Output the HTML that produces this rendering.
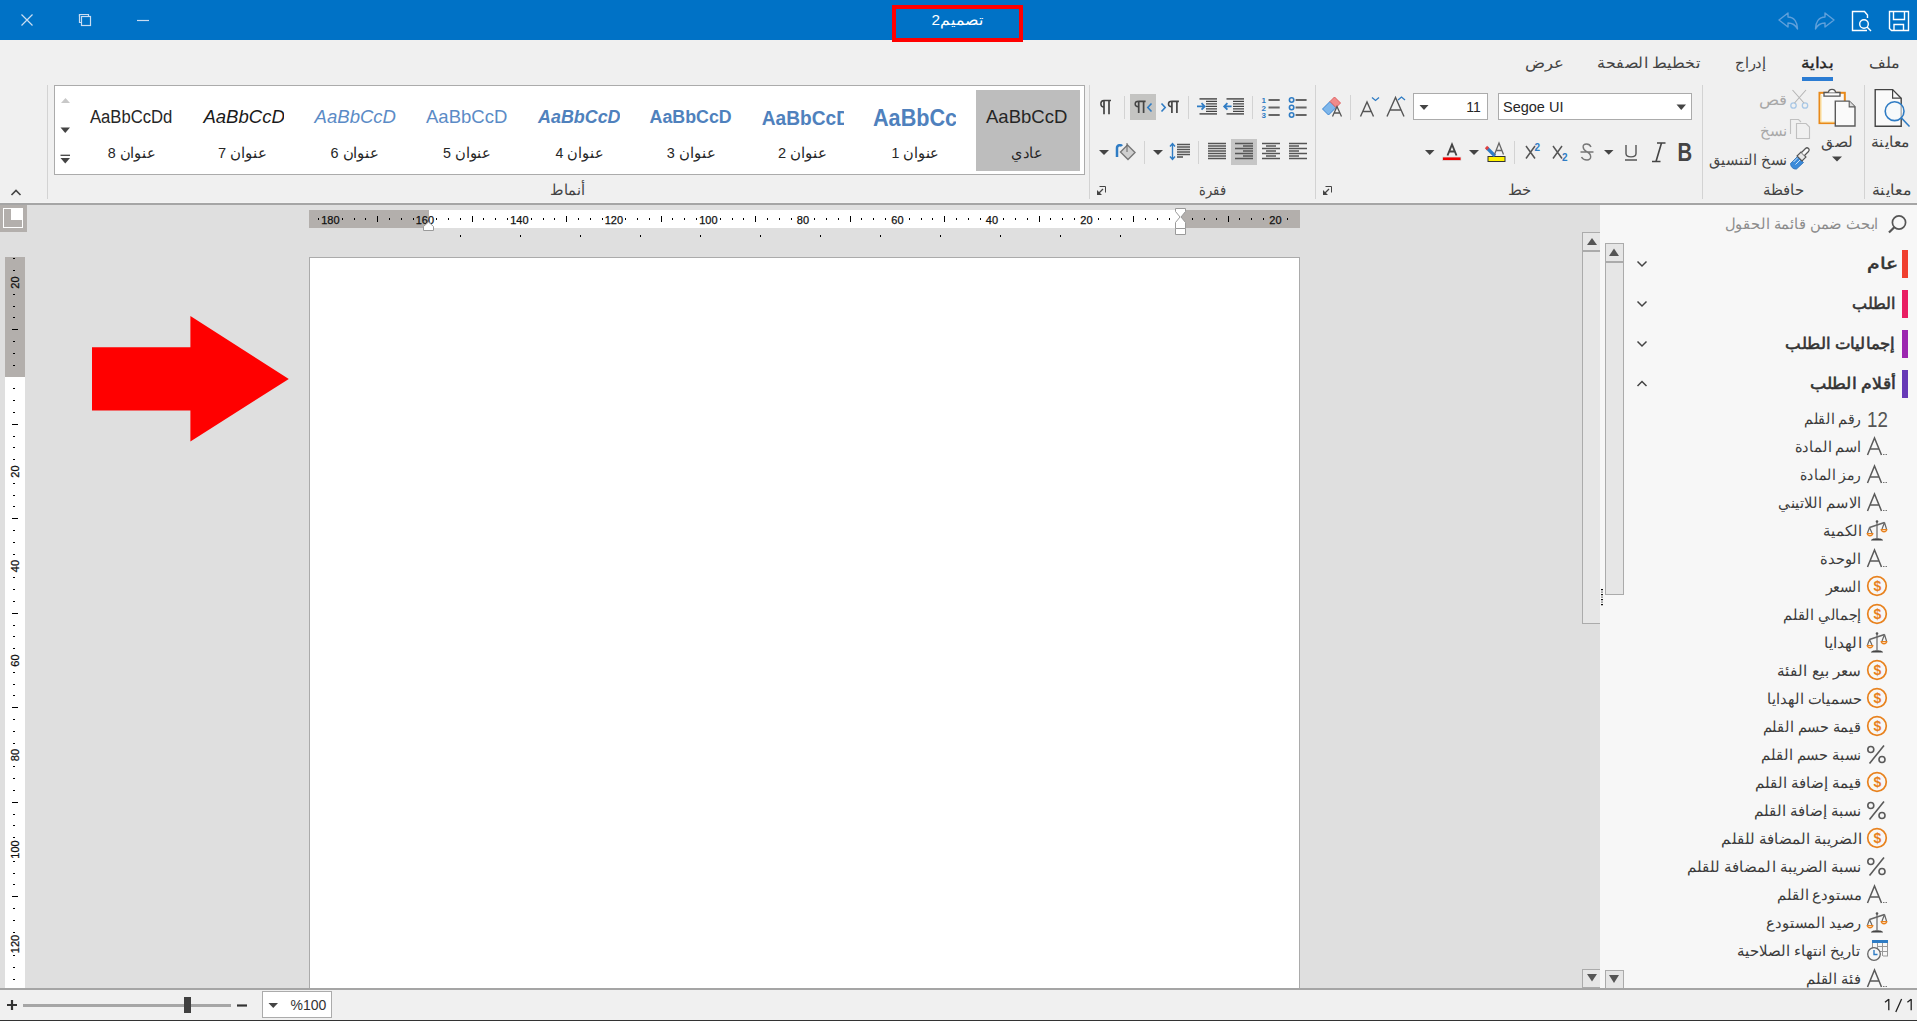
<!DOCTYPE html>
<html><head><meta charset="utf-8"><style>
html,body{margin:0;padding:0;}
body{width:1917px;height:1021px;overflow:hidden;position:relative;background:#F0F0F0;font-family:"Liberation Sans",sans-serif;}
#w>div{position:absolute;}
svg{position:absolute;left:0;top:0;}
</style></head><body><div id="w">
<div style="left:0px;top:0px;width:1917px;height:40px;background:#0072C6;"></div><div style="left:0px;top:40px;width:1917px;height:163px;background:#F0F0F0;"></div><div style="left:0px;top:202px;width:1917px;height:1px;background:#F3F3F3;"></div><div style="left:0px;top:203px;width:1917px;height:2px;background:#A5A5A5;"></div><div style="left:0px;top:205px;width:1600px;height:783px;background:#DFDFDF;"></div><div style="left:1600px;top:205px;width:317px;height:783px;background:#F7F7F7;"></div><div style="left:0px;top:988px;width:1917px;height:2px;background:#A5A5A5;"></div><div style="left:0px;top:990px;width:1917px;height:30px;background:#F0F0F0;"></div><div style="left:0px;top:1020px;width:1917px;height:1px;background:#333333;"></div><div style="left:892px;top:5px;width:131px;height:37px;border:4px solid #FF0000;box-sizing:border-box;"></div><div style="left:1802px;top:77px;width:31px;height:4px;background:#2B7CD3;"></div><div style="left:47px;top:85px;width:1px;height:114px;background:#D3D3D3;"></div><div style="left:1089px;top:85px;width:1px;height:114px;background:#D3D3D3;"></div><div style="left:1315px;top:85px;width:1px;height:114px;background:#D3D3D3;"></div><div style="left:1702px;top:85px;width:1px;height:114px;background:#D3D3D3;"></div><div style="left:1864px;top:85px;width:1px;height:114px;background:#D3D3D3;"></div><div style="left:54px;top:85px;width:1031px;height:90px;background:#FFFFFF;border:1px solid #ABABAB;box-sizing:border-box;"></div><div style="left:976px;top:90px;width:104px;height:81px;background:#BDBDBD;"></div><div style="left:1498px;top:93px;width:194px;height:27px;background:#FFFFFF;border:1px solid #ABABAB;box-sizing:border-box;"></div><div style="left:1413px;top:93px;width:75px;height:27px;background:#FFFFFF;border:1px solid #ABABAB;box-sizing:border-box;"></div><div style="left:262px;top:991px;width:70px;height:27px;background:#FFFFFF;border:1px solid #ABABAB;box-sizing:border-box;"></div><div style="left:1514px;top:141px;width:1px;height:23px;background:#D3D3D3;"></div><div style="left:1350px;top:95px;width:1px;height:25px;background:#D3D3D3;"></div><div style="left:1124px;top:96px;width:1px;height:23px;background:#D3D3D3;"></div><div style="left:1130px;top:94px;width:26px;height:26px;background:#C4C4C2;"></div><div style="left:1188px;top:96px;width:1px;height:23px;background:#D3D3D3;"></div><div style="left:1252px;top:96px;width:1px;height:23px;background:#D3D3D3;"></div><div style="left:1144px;top:141px;width:1px;height:23px;background:#D3D3D3;"></div><div style="left:1198px;top:141px;width:1px;height:23px;background:#D3D3D3;"></div><div style="left:1231px;top:139px;width:26px;height:26px;background:#C6C6C6;"></div><div style="left:0px;top:205px;width:27px;height:27px;background:#B3AFAC;"></div><div style="left:3px;top:208px;width:20px;height:20px;background:#FFFFFF;"></div><div style="left:309px;top:210px;width:991px;height:18px;background:#FFFFFF;"></div><div style="left:309px;top:210px;width:120px;height:18px;background:#B3AFAC;"></div><div style="left:1181px;top:210px;width:119px;height:18px;background:#B3AFAC;"></div><div style="left:5px;top:257px;width:20px;height:731px;background:#FFFFFF;"></div><div style="left:5px;top:257px;width:20px;height:120px;background:#B3AFAC;"></div><div style="left:309px;top:257px;width:991px;height:731px;background:#FFFFFF;border:1px solid #ABABAB;border-bottom:none;box-sizing:border-box;"></div><div style="left:1582px;top:232px;width:18px;height:392px;background:#E6E6E6;border:1px solid #ABABAB;border-right:none;box-sizing:border-box;"></div><div style="left:1583px;top:250px;width:17px;height:2px;background:#ABABAB;"></div><div style="left:1582px;top:969px;width:18px;height:19px;background:#E6E6E6;border:1px solid #ABABAB;border-right:none;box-sizing:border-box;"></div><div style="left:1605px;top:243px;width:19px;height:352px;background:#E6E6E6;border:1px solid #ABABAB;box-sizing:border-box;"></div><div style="left:1606px;top:261px;width:17px;height:2px;background:#ABABAB;"></div><div style="left:1605px;top:970px;width:19px;height:18px;background:#E6E6E6;border:1px solid #ABABAB;border-bottom:none;box-sizing:border-box;"></div><div style="left:1902px;top:250px;width:6px;height:28px;background:#F0402F;"></div><div style="left:1902px;top:290px;width:6px;height:28px;background:#E91E63;"></div><div style="left:1902px;top:330px;width:6px;height:28px;background:#9C27B0;"></div><div style="left:1902px;top:370px;width:6px;height:28px;background:#673AB7;"></div><div style="left:23px;top:1004px;width:208px;height:3px;background:#A6A6A6;"></div><div style="left:184px;top:997px;width:7px;height:16px;background:#404040;"></div>
</div><svg width="1917" height="1021" viewBox="0 0 1917 1021"><defs><clipPath id="cl0"><rect x="977" y="95" width="91" height="40"/></clipPath><clipPath id="cl1"><rect x="865" y="95" width="91" height="40"/></clipPath><clipPath id="cl2"><rect x="753" y="95" width="91" height="40"/></clipPath><clipPath id="cl3"><rect x="641" y="95" width="91" height="40"/></clipPath><clipPath id="cl4"><rect x="529" y="95" width="91" height="40"/></clipPath><clipPath id="cl5"><rect x="417" y="95" width="91" height="40"/></clipPath><clipPath id="cl6"><rect x="305" y="95" width="91" height="40"/></clipPath><clipPath id="cl7"><rect x="193" y="95" width="91" height="40"/></clipPath><clipPath id="cl8"><rect x="81" y="95" width="91" height="40"/></clipPath></defs>
<g><text x="931.51" y="25.30" textLength="51.69" lengthAdjust="spacingAndGlyphs" font-family="Liberation Sans" font-size="14.60" font-weight="normal" font-style="normal" fill="#ffffff">تصميم2</text></g><g><text x="1868.59" y="67.60" textLength="31.17" lengthAdjust="spacingAndGlyphs" font-family="Liberation Sans" font-size="14.60" font-weight="normal" font-style="normal" fill="#444444">ملف</text></g><g><text x="1800.98" y="67.60" textLength="32.33" lengthAdjust="spacingAndGlyphs" font-family="Liberation Sans" font-size="14.60" font-weight="normal" font-style="normal" fill="#262626" stroke="#262626" stroke-width="0.35">بداية</text></g><g><text x="1735.03" y="67.60" textLength="31.04" lengthAdjust="spacingAndGlyphs" font-family="Liberation Sans" font-size="14.60" font-weight="normal" font-style="normal" fill="#444444">إدراج</text></g><g><text x="1597.00" y="67.60" textLength="103.13" lengthAdjust="spacingAndGlyphs" font-family="Liberation Sans" font-size="14.60" font-weight="normal" font-style="normal" fill="#444444">تخطيط الصفحة</text></g><g><text x="1524.99" y="67.60" textLength="38.74" lengthAdjust="spacingAndGlyphs" font-family="Liberation Sans" font-size="14.60" font-weight="normal" font-style="normal" fill="#444444">عرض</text></g><g><text x="986.00" y="122.90" textLength="81.41" lengthAdjust="spacingAndGlyphs" font-family="Liberation Sans" font-size="19.00" font-weight="normal" font-style="normal" fill="#262626">AaBbCcD</text></g><g clip-path="url(#cl1)"><text x="873.00" y="126.00" textLength="84.13" lengthAdjust="spacingAndGlyphs" font-family="Liberation Sans" font-size="23.20" font-weight="bold" font-style="normal" fill="#4F81BD">AaBbCc</text></g><g clip-path="url(#cl2)"><text x="761.80" y="124.70" textLength="88.18" lengthAdjust="spacingAndGlyphs" font-family="Liberation Sans" font-size="20.50" font-weight="bold" font-style="normal" fill="#4F81BD">AaBbCcD</text></g><g clip-path="url(#cl3)"><text x="649.60" y="122.90" textLength="82.13" lengthAdjust="spacingAndGlyphs" font-family="Liberation Sans" font-size="19.10" font-weight="bold" font-style="normal" fill="#4F81BD">AaBbCcD</text></g><g clip-path="url(#cl4)"><text x="538.00" y="122.90" textLength="82.54" lengthAdjust="spacingAndGlyphs" font-family="Liberation Sans" font-size="19.20" font-weight="bold" font-style="italic" fill="#4F81BD">AaBbCcD</text></g><g clip-path="url(#cl5)"><text x="426.00" y="123.00" textLength="81.42" lengthAdjust="spacingAndGlyphs" font-family="Liberation Sans" font-size="19.00" font-weight="normal" font-style="normal" fill="#5B8BC6">AaBbCcD</text></g><g clip-path="url(#cl6)"><text x="314.60" y="123.00" textLength="81.41" lengthAdjust="spacingAndGlyphs" font-family="Liberation Sans" font-size="19.00" font-weight="normal" font-style="italic" fill="#5B8BC6">AaBbCcD</text></g><g clip-path="url(#cl7)"><text x="203.40" y="123.00" textLength="81.41" lengthAdjust="spacingAndGlyphs" font-family="Liberation Sans" font-size="19.00" font-weight="normal" font-style="italic" fill="#1a1a1a">AaBbCcD</text></g><g><text x="89.90" y="123.00" textLength="82.47" lengthAdjust="spacingAndGlyphs" font-family="Liberation Sans" font-size="18.00" font-weight="normal" font-style="normal" fill="#262626">AaBbCcDd</text></g><g><text x="1011.01" y="158.20" textLength="32.02" lengthAdjust="spacingAndGlyphs" font-family="Liberation Sans" font-size="14.60" font-weight="normal" font-style="normal" fill="#262626">عادي</text></g><g><text x="891.52" y="158.20" textLength="47.66" lengthAdjust="spacingAndGlyphs" font-family="Liberation Sans" font-size="14.60" font-weight="normal" font-style="normal" fill="#262626">عنوان 1</text></g><g><text x="778.01" y="158.20" textLength="49.20" lengthAdjust="spacingAndGlyphs" font-family="Liberation Sans" font-size="14.60" font-weight="normal" font-style="normal" fill="#262626">عنوان 2</text></g><g><text x="666.79" y="158.20" textLength="48.72" lengthAdjust="spacingAndGlyphs" font-family="Liberation Sans" font-size="14.60" font-weight="normal" font-style="normal" fill="#262626">عنوان 3</text></g><g><text x="555.60" y="158.20" textLength="47.70" lengthAdjust="spacingAndGlyphs" font-family="Liberation Sans" font-size="14.60" font-weight="normal" font-style="normal" fill="#262626">عنوان 4</text></g><g><text x="443.00" y="158.20" textLength="48.16" lengthAdjust="spacingAndGlyphs" font-family="Liberation Sans" font-size="14.60" font-weight="normal" font-style="normal" fill="#262626">عنوان 5</text></g><g><text x="330.49" y="158.20" textLength="48.72" lengthAdjust="spacingAndGlyphs" font-family="Liberation Sans" font-size="14.60" font-weight="normal" font-style="normal" fill="#262626">عنوان 6</text></g><g><text x="218.00" y="158.20" textLength="49.19" lengthAdjust="spacingAndGlyphs" font-family="Liberation Sans" font-size="14.60" font-weight="normal" font-style="normal" fill="#262626">عنوان 7</text></g><g><text x="107.80" y="158.20" textLength="48.14" lengthAdjust="spacingAndGlyphs" font-family="Liberation Sans" font-size="14.60" font-weight="normal" font-style="normal" fill="#262626">عنوان 8</text></g><g><text x="549.99" y="195.00" textLength="35.02" lengthAdjust="spacingAndGlyphs" font-family="Liberation Sans" font-size="14.60" font-weight="normal" font-style="normal" fill="#444444">أنماط</text></g><g><text x="1199.00" y="195.30" textLength="26.76" lengthAdjust="spacingAndGlyphs" font-family="Liberation Sans" font-size="14.60" font-weight="normal" font-style="normal" fill="#444444">فقرة</text></g><g><text x="1507.96" y="195.00" textLength="23.02" lengthAdjust="spacingAndGlyphs" font-family="Liberation Sans" font-size="14.60" font-weight="normal" font-style="normal" fill="#444444">خط</text></g><g><text x="1762.62" y="195.00" textLength="41.01" lengthAdjust="spacingAndGlyphs" font-family="Liberation Sans" font-size="14.60" font-weight="normal" font-style="normal" fill="#444444">حافظة</text></g><g><text x="1872.00" y="195.30" textLength="39.11" lengthAdjust="spacingAndGlyphs" font-family="Liberation Sans" font-size="14.60" font-weight="normal" font-style="normal" fill="#444444">معاينة</text></g><g><text x="1871.01" y="146.80" textLength="38.63" lengthAdjust="spacingAndGlyphs" font-family="Liberation Sans" font-size="14.60" font-weight="normal" font-style="normal" fill="#444444">معاينة</text></g><g><text x="1821.40" y="146.50" textLength="32.14" lengthAdjust="spacingAndGlyphs" font-family="Liberation Sans" font-size="14.60" font-weight="normal" font-style="normal" fill="#444444">لصق</text></g><g><text x="1759.03" y="105.00" textLength="27.75" lengthAdjust="spacingAndGlyphs" font-family="Liberation Sans" font-size="14.60" font-weight="normal" font-style="normal" fill="#a8a8a8">قص</text></g><g><text x="1759.62" y="135.60" textLength="27.02" lengthAdjust="spacingAndGlyphs" font-family="Liberation Sans" font-size="14.60" font-weight="normal" font-style="normal" fill="#a8a8a8">نسخ</text></g><g><text x="1708.79" y="164.80" textLength="78.50" lengthAdjust="spacingAndGlyphs" font-family="Liberation Sans" font-size="14.60" font-weight="normal" font-style="normal" fill="#444444">نسخ التنسيق</text></g><g><text x="1503.00" y="112.00" textLength="60.47" lengthAdjust="spacingAndGlyphs" font-family="Liberation Sans" font-size="15.00" font-weight="normal" font-style="normal" fill="#262626">Segoe UI</text></g><g><text x="1466.34" y="112.00" textLength="14.51" lengthAdjust="spacingAndGlyphs" font-family="Liberation Sans" font-size="15.00" font-weight="normal" font-style="normal" fill="#262626">11</text></g><g><text x="290.50" y="1010.00" textLength="35.86" lengthAdjust="spacingAndGlyphs" font-family="Liberation Sans" font-size="15.00" font-weight="normal" font-style="normal" fill="#333333">%100</text></g><path d="M1888.8 999V1010.2M1885 1002.2L1888.8 999.2M1911.2 999V1010.2M1907.4 1002.2L1911.2 999.2M1901.6 999L1895.8 1012" stroke="#222" stroke-width="1.3" fill="none"/><g><text x="1724.71" y="229.30" textLength="153.63" lengthAdjust="spacingAndGlyphs" font-family="Liberation Sans" font-size="14.60" font-weight="normal" font-style="normal" fill="#8c8c8c">ابحث ضمن قائمة الحقول</text></g><g><text x="1866.96" y="268.80" textLength="31.90" lengthAdjust="spacingAndGlyphs" font-family="Liberation Sans" font-size="15.90" font-weight="normal" font-style="normal" fill="#333333" stroke="#333333" stroke-width="0.55">عام</text></g><g><text x="1851.80" y="308.80" textLength="43.00" lengthAdjust="spacingAndGlyphs" font-family="Liberation Sans" font-size="15.90" font-weight="normal" font-style="normal" fill="#333333" stroke="#333333" stroke-width="0.55">الطلب</text></g><g><text x="1785.51" y="348.80" textLength="108.98" lengthAdjust="spacingAndGlyphs" font-family="Liberation Sans" font-size="15.90" font-weight="normal" font-style="normal" fill="#333333" stroke="#333333" stroke-width="0.55">إجماليات الطلب</text></g><g><text x="1809.50" y="388.80" textLength="86.05" lengthAdjust="spacingAndGlyphs" font-family="Liberation Sans" font-size="15.90" font-weight="normal" font-style="normal" fill="#333333" stroke="#333333" stroke-width="0.55">أقلام الطلب</text></g><g><text x="1804.20" y="424.10" textLength="56.50" lengthAdjust="spacingAndGlyphs" font-family="Liberation Sans" font-size="14.60" font-weight="normal" font-style="normal" fill="#3c3c3c">رقم القلم</text></g><g><text x="1794.79" y="452.10" textLength="66.49" lengthAdjust="spacingAndGlyphs" font-family="Liberation Sans" font-size="14.60" font-weight="normal" font-style="normal" fill="#3c3c3c">اسم المادة</text></g><g><text x="1800.01" y="480.10" textLength="60.49" lengthAdjust="spacingAndGlyphs" font-family="Liberation Sans" font-size="14.60" font-weight="normal" font-style="normal" fill="#3c3c3c">رمز المادة</text></g><g><text x="1777.79" y="508.10" textLength="83.53" lengthAdjust="spacingAndGlyphs" font-family="Liberation Sans" font-size="14.60" font-weight="normal" font-style="normal" fill="#3c3c3c">الاسم اللاتيني</text></g><g><text x="1822.99" y="536.10" textLength="38.48" lengthAdjust="spacingAndGlyphs" font-family="Liberation Sans" font-size="14.60" font-weight="normal" font-style="normal" fill="#3c3c3c">الكمية</text></g><g><text x="1820.30" y="564.10" textLength="40.95" lengthAdjust="spacingAndGlyphs" font-family="Liberation Sans" font-size="14.60" font-weight="normal" font-style="normal" fill="#3c3c3c">الوحدة</text></g><g><text x="1825.69" y="592.10" textLength="35.02" lengthAdjust="spacingAndGlyphs" font-family="Liberation Sans" font-size="14.60" font-weight="normal" font-style="normal" fill="#3c3c3c">السعر</text></g><g><text x="1783.30" y="620.10" textLength="78.04" lengthAdjust="spacingAndGlyphs" font-family="Liberation Sans" font-size="14.60" font-weight="normal" font-style="normal" fill="#3c3c3c">إجمالي القلم</text></g><g><text x="1823.68" y="648.10" textLength="38.08" lengthAdjust="spacingAndGlyphs" font-family="Liberation Sans" font-size="14.60" font-weight="normal" font-style="normal" fill="#3c3c3c">الهدايا</text></g><g><text x="1777.00" y="676.10" textLength="84.65" lengthAdjust="spacingAndGlyphs" font-family="Liberation Sans" font-size="14.60" font-weight="normal" font-style="normal" fill="#3c3c3c">سعر بيع الفئة</text></g><g><text x="1767.49" y="704.10" textLength="94.02" lengthAdjust="spacingAndGlyphs" font-family="Liberation Sans" font-size="14.60" font-weight="normal" font-style="normal" fill="#3c3c3c">حسميات الهدايا</text></g><g><text x="1762.70" y="732.10" textLength="98.05" lengthAdjust="spacingAndGlyphs" font-family="Liberation Sans" font-size="14.60" font-weight="normal" font-style="normal" fill="#3c3c3c">قيمة حسم القلم</text></g><g><text x="1761.30" y="760.10" textLength="100.07" lengthAdjust="spacingAndGlyphs" font-family="Liberation Sans" font-size="14.60" font-weight="normal" font-style="normal" fill="#3c3c3c">نسبة حسم القلم</text></g><g><text x="1755.10" y="788.10" textLength="106.11" lengthAdjust="spacingAndGlyphs" font-family="Liberation Sans" font-size="14.60" font-weight="normal" font-style="normal" fill="#3c3c3c">قيمة إضافة القلم</text></g><g><text x="1753.80" y="816.10" textLength="107.62" lengthAdjust="spacingAndGlyphs" font-family="Liberation Sans" font-size="14.60" font-weight="normal" font-style="normal" fill="#3c3c3c">نسبة إضافة القلم</text></g><g><text x="1721.49" y="844.10" textLength="140.13" lengthAdjust="spacingAndGlyphs" font-family="Liberation Sans" font-size="14.60" font-weight="normal" font-style="normal" fill="#3c3c3c">الضريبة المضافة للقلم</text></g><g><text x="1687.21" y="872.10" textLength="173.68" lengthAdjust="spacingAndGlyphs" font-family="Liberation Sans" font-size="14.60" font-weight="normal" font-style="normal" fill="#3c3c3c">نسبة الضريبة المضافة للقلم</text></g><g><text x="1777.00" y="900.10" textLength="84.53" lengthAdjust="spacingAndGlyphs" font-family="Liberation Sans" font-size="14.60" font-weight="normal" font-style="normal" fill="#3c3c3c">مستودع القلم</text></g><g><text x="1766.10" y="928.10" textLength="95.08" lengthAdjust="spacingAndGlyphs" font-family="Liberation Sans" font-size="14.60" font-weight="normal" font-style="normal" fill="#3c3c3c">رصيد المستودع</text></g><g><text x="1737.30" y="956.10" textLength="123.11" lengthAdjust="spacingAndGlyphs" font-family="Liberation Sans" font-size="14.60" font-weight="normal" font-style="normal" fill="#3c3c3c">تاريخ انتهاء الصلاحية</text></g><g><text x="1805.91" y="984.10" textLength="55.04" lengthAdjust="spacingAndGlyphs" font-family="Liberation Sans" font-size="14.60" font-weight="normal" font-style="normal" fill="#3c3c3c">فئة القلم</text></g><g stroke="#C9DDF2" stroke-width="1.2" fill="none"><path d="M21.5 14.5L32.5 25.5M32.5 14.5L21.5 25.5"/><path d="M79.5 16.5V14.5H88.5V16.5"/><rect x="81.5" y="16.5" width="9" height="9"/><path d="M79.5 14.5V22.5H81.5"/><path d="M137 20.5H149"/></g><g fill="none" stroke="#5FA0DB" stroke-width="1.4" stroke-linejoin="round"><path d="M1779 20L1788 13V17C1794 17 1797.5 22 1797.5 29C1795 24 1792 23 1788 23V27Z"/><path d="M1834 20L1825 13V17C1819 17 1815.5 22 1815.5 29C1818 24 1821 23 1825 23V27Z"/></g><g fill="none" stroke="#FFFFFF" stroke-width="1.4"><path d="M1867 30.5H1852.5V11.5H1864.5L1867.5 15V18"/><circle cx="1864" cy="24" r="4.3"/><path d="M1867 27L1871 31"/><path d="M1889.5 11.5H1908.5V30.5H1891.5L1889.5 28.5Z"/><path d="M1893.5 11.5V19.5H1904.5V11.5"/><path d="M1894 30.5V24.5H1903.5V30.5"/></g><path d="M1875.2 126.2V89.6H1892.6L1901.2 98.2V126.2Z" fill="#FAFAFA" stroke="#444" stroke-width="1.4"/><path d="M1892.6 89.6V98.2H1901.2" fill="none" stroke="#444" stroke-width="1.2"/><g fill="none" stroke="#2F7CC4" stroke-width="1.6"><circle cx="1894.6" cy="111.2" r="9.4" fill="#F4F8FC" fill-opacity="0.6"/><path d="M1901.5 118L1909.5 126.5"/></g><rect x="1819.5" y="92.8" width="25.3" height="30.3" fill="#FAFAFA" stroke="#E8891A" stroke-width="2"/><path d="M1821 95V122H1844" fill="none" stroke="#FCE2A0" stroke-width="1.2"/><path d="M1824 92.5H1840V96.2H1824Z" fill="#fff" stroke="#555" stroke-width="1.3"/><path d="M1828.5 92.5C1828.5 88.3 1835.5 88.3 1835.5 92.5" fill="#fff" stroke="#555" stroke-width="1.3"/><path d="M1835.3 126V101.1H1849.2L1855 106.9V126Z" fill="#FAFAFA" stroke="#5A5A5A" stroke-width="1.4"/><path d="M1849.2 101.1V106.9H1855" fill="#DDD" stroke="#5A5A5A" stroke-width="1.1"/><path d="M1832 156.5H1842L1837.0 161.5Z" fill="#444"/><g fill="none" stroke="#A9C8E6" stroke-width="1.3"><circle cx="1793.5" cy="105.5" r="2.7"/><circle cx="1805" cy="105.5" r="2.7"/></g><path d="M1794.5 103L1806 90M1804 103L1792.5 90" stroke="#B5B5B5" stroke-width="1.1"/><g fill="#F0F0F0" stroke="#C0C0C0" stroke-width="1.1"><path d="M1790.5 134V119.5H1798.5L1801 122"/><path d="M1796.5 138.5V123.5H1806L1809.5 127V138.5Z"/></g><path d="M1790.5 163.5L1797.5 156.5L1803.5 162.5L1796.5 169C1793 169.5 1790.5 166.5 1790.5 163.5Z" fill="#3C8BDA" stroke="#2A6CB5" stroke-width="0.8"/><path d="M1793.5 162L1798 157.5M1795.5 164.5L1800 160" stroke="#CFE4F8" stroke-width="1"/><path d="M1797 156L1801 152L1806 157L1802 161Z" fill="#E8E8E8" stroke="#555" stroke-width="1.1"/><path d="M1801.5 152.5L1805.5 148.5C1807.5 146.5 1810.5 149.5 1808.5 151.5L1804.5 155.5" fill="#FAFAFA" stroke="#555" stroke-width="1.2"/><path d="M1676.5 104.5H1686L1681.25 110Z" fill="#444"/><path d="M1419.5 105H1428.5L1424.0 110Z" fill="#444"/><text x="1677.5" y="161.5" font-family="Liberation Sans" font-weight="bold" font-size="26" fill="#444" transform="translate(1677.5,161.5) scale(0.78,1) translate(-1677.5,-161.5)">B</text><path d="M1657 143H1665.5M1652 161.5H1660.5M1661.5 143L1656 161.5" stroke="#444" stroke-width="1.6" fill="none"/><path d="M1626 145V153.5C1626 158 1636 158 1636 153.5V145M1625 160H1637" stroke="#555" stroke-width="1.4" fill="none"/><path d="M1591 147C1590 144.5 1588 144 1586.5 144C1582 144 1582 149 1586.5 151.5C1592 154 1592 160 1587 160C1585 160 1582.5 159 1581.5 157M1580.5 152H1593.5" stroke="#777" stroke-width="1.4" fill="none"/><path d="M1604 150H1613.5L1608.75 154.8Z" fill="#444"/><path d="M1553 146L1562 158.5M1562 146L1553 158.5" stroke="#555" stroke-width="1.5"/><text x="1562" y="160.5" font-family="Liberation Sans" font-weight="bold" font-size="10" fill="#2F7CC4">2</text><path d="M1526 146L1535 158.5M1535 146L1526 158.5" stroke="#555" stroke-width="1.5"/><text x="1534.5" y="150.5" font-family="Liberation Sans" font-weight="bold" font-size="10" fill="#2F7CC4">2</text><rect x="1488" y="156.5" width="17" height="5" fill="#FFF200" stroke="#333" stroke-width="1"/><path d="M1487 148L1495 156" stroke="#2F7CC4" stroke-width="3.2"/><path d="M1486 147L1488 149" stroke="#E04040" stroke-width="3.2"/><path d="M1494.5 154.5L1499 143L1503.5 154.5M1496.5 150.5H1501.5" stroke="#666" stroke-width="1.3" fill="none"/><path d="M1469 150H1479L1474.0 155Z" fill="#444"/><path d="M1447.5 155.5L1452 144.5L1456.5 155.5M1449.3 151.5H1454.7" stroke="#444" stroke-width="1.9" fill="none"/><rect x="1442.5" y="157" width="18.5" height="3.5" fill="#F00000" stroke="#D8E4E4" stroke-width="0.8"/><path d="M1425 150H1434.5L1429.75 155Z" fill="#444"/><path d="M1387 116.5L1395.5 97.5L1404 116.5M1390 110H1401" stroke="#555" stroke-width="1.4" fill="none"/><path d="M1398 100L1401.5 97L1405 100" stroke="#2F7CC4" stroke-width="1.3" fill="none"/><path d="M1360.5 116.5L1367 102L1373.5 116.5M1363 111.5H1371" stroke="#555" stroke-width="1.4" fill="none"/><path d="M1372 97.5L1375.5 100.5L1379 97.5" stroke="#2F7CC4" stroke-width="1.3" fill="none"/><path d="M1322.5 109L1330 101.5L1336 107.5L1328.5 115Z" fill="#7EB6EA" stroke="#3A86D4" stroke-width="1"/><path d="M1330 101.5L1334.5 97L1340.5 103L1336 107.5Z" fill="#F08A8A" stroke="#E06060" stroke-width="1"/><path d="M1332.5 116.5L1337 106.5L1341.5 116.5M1334 113H1340" stroke="#555" stroke-width="1.3" fill="none"/><g stroke="#444" fill="none" stroke-width="1"><path d="M1325.5 186.5H1331.5V192.5"/></g><path d="M1323 195H1328L1323 190Z" fill="#444"/><path d="M1324 194L1329 189" stroke="#444" stroke-width="1.3"/><g stroke="#444" fill="none" stroke-width="1"><path d="M1099.5 186.5H1105.5V192.5"/></g><path d="M1097 195H1102L1097 190Z" fill="#444"/><path d="M1098 194L1103 189" stroke="#444" stroke-width="1.3"/><path d="M1104 100.5H1111M1104 100.5V114.3M1109 100.5V114.3" stroke="#444" stroke-width="1.7" fill="none"/><path d="M1104 100.5C1099.8 100.5 1099.8 107.0 1104 107.0" stroke="#444" stroke-width="1.5" fill="none"/><path d="M1138.7 101.3H1145.6M1138.7 101.3V113M1143.6 101.3V113" stroke="#444" stroke-width="1.7" fill="none"/><path d="M1138.7 101.3C1134.0 101.3 1134.0 106.75 1138.7 106.75" stroke="#444" stroke-width="1.5" fill="none"/><path d="M1151.5 103.5L1147.8 107.5L1151.5 111.5" stroke="#2F7CC4" stroke-width="1.6" fill="none"/><path d="M1161.5 103.5L1165.2 107.5L1161.5 111.5" stroke="#2F7CC4" stroke-width="1.6" fill="none"/><path d="M1171.9 101.3H1178.9M1171.9 101.3V113M1176.9 101.3V113" stroke="#444" stroke-width="1.7" fill="none"/><path d="M1171.9 101.3C1167.3 101.3 1167.3 106.75 1171.9 106.75" stroke="#444" stroke-width="1.5" fill="none"/><path d="M1199.5 98.8H1217M1199.5 113.9H1217" stroke="#666" stroke-width="1.8"/><path d="M1206 101.4H1217M1206 103.9H1217M1206 106.4H1217M1206 108.9H1217M1206 111.4H1217" stroke="#444" stroke-width="1.3"/><path d="M1197 106.4H1204.5M1201.5 103.2L1204.7 106.4L1201.5 109.6" stroke="#2F7CC4" stroke-width="1.8" fill="none"/><path d="M1226.5 98.8H1244M1226.5 113.9H1244" stroke="#666" stroke-width="1.8"/><path d="M1233 101.4H1244M1233 103.9H1244M1233 106.4H1244M1233 108.9H1244M1233 111.4H1244" stroke="#444" stroke-width="1.3"/><path d="M1224.2 106.4H1231.6M1227.4 103.2L1224.2 106.4L1227.4 109.6" stroke="#2F7CC4" stroke-width="1.8" fill="none"/><path d="M1268.5 100H1279.7M1268.5 107.5H1279.7M1268.5 115H1279.7" stroke="#666" stroke-width="1.9"/><text x="1261.6" y="103.4" font-family="Liberation Sans" font-weight="bold" font-size="8" fill="#2F7CC4">1</text><text x="1261.6" y="110.60000000000001" font-family="Liberation Sans" font-weight="bold" font-size="8" fill="#2F7CC4">2</text><text x="1261.6" y="117.80000000000001" font-family="Liberation Sans" font-weight="bold" font-size="8" fill="#2F7CC4">3</text><path d="M1295.6 100H1306.6M1295.6 107.5H1306.6M1295.6 115H1306.6" stroke="#666" stroke-width="1.9"/><circle cx="1291.6" cy="100.0" r="2.2" fill="none" stroke="#2F7CC4" stroke-width="1.6"/><circle cx="1291.6" cy="107.5" r="2.2" fill="none" stroke="#2F7CC4" stroke-width="1.6"/><circle cx="1291.6" cy="115.0" r="2.2" fill="none" stroke="#2F7CC4" stroke-width="1.6"/><path d="M1099 150H1109L1104.0 155Z" fill="#444"/><path d="M1117 157V148C1117 145 1121 144.5 1122 146" stroke="#2F7CC4" stroke-width="2.5" fill="none"/><path d="M1120.5 152L1127.5 145L1135 152.5L1128 159.5Z" fill="#CFCFCF" stroke="#777" stroke-width="1.4"/><path d="M1127 143V152" stroke="#666" stroke-width="1"/><path d="M1153 150H1163L1158.0 155Z" fill="#444"/><path d="M1177 144.5H1190M1177 147H1190M1177 149.5H1190M1177 152H1190M1177 154.5H1190" stroke="#555" stroke-width="1.6"/><path d="M1177 157H1183" stroke="#555" stroke-width="1.6"/><path d="M1172.5 144V159M1170 146.5L1172.5 143.5L1175 146.5M1170 156.5L1172.5 159.5L1175 156.5" stroke="#2F7CC4" stroke-width="1.4" fill="none"/><path d="M1208 143.5H1226M1208 146H1226M1208 148.5H1226M1208 151H1226M1208 153.5H1226M1208 156H1226M1208 158.5H1226" stroke="#555" stroke-width="1.3"/><path d="M1235 143.5H1253M1235 148.5H1253M1235 153.5H1253M1235 158.5H1253" stroke="#555" stroke-width="1.3"/><path d="M1243 146H1253M1243 151H1253M1243 156H1253" stroke="#555" stroke-width="1.3"/><path d="M1262 143.5H1280M1262 148.5H1280M1262 153.5H1280M1262 158.5H1280" stroke="#555" stroke-width="1.3"/><path d="M1266 146H1276M1266 151H1276M1266 156H1276" stroke="#555" stroke-width="1.3"/><path d="M1289 143.5H1307M1289 148.5H1307M1289 153.5H1307M1289 158.5H1307" stroke="#555" stroke-width="1.3"/><path d="M1289 146H1299M1289 151H1299M1289 156H1299" stroke="#555" stroke-width="1.3"/><path d="M61 103H70L65.5 98Z" fill="#C8C8C8"/><path d="M60.5 127.5H70L65.25 133Z" fill="#444"/><path d="M60.5 155.3H70" stroke="#444" stroke-width="1.3"/><path d="M60.5 158H70L65.25 163.5Z" fill="#444"/><path d="M11.5 195L16 190.5L20.5 195" stroke="#444" stroke-width="1.6" fill="none"/><path d="M4 209H11V220H22V227H4Z" fill="#B3AFAC"/><path d="M318 218h1v2h-1zM342 218h1v2h-1zM354 218h1v2h-1zM365 218h1v2h-1zM377 216h1v6h-1zM389 218h1v2h-1zM401 218h1v2h-1zM413 218h1v2h-1zM436 218h1v2h-1zM448 218h1v2h-1zM460 218h1v2h-1zM472 216h1v6h-1zM483 218h1v2h-1zM495 218h1v2h-1zM507 218h1v2h-1zM531 218h1v2h-1zM543 218h1v2h-1zM554 218h1v2h-1zM566 216h1v6h-1zM578 218h1v2h-1zM590 218h1v2h-1zM602 218h1v2h-1zM625 218h1v2h-1zM637 218h1v2h-1zM649 218h1v2h-1zM661 216h1v6h-1zM672 218h1v2h-1zM684 218h1v2h-1zM696 218h1v2h-1zM720 218h1v2h-1zM732 218h1v2h-1zM743 218h1v2h-1zM755 216h1v6h-1zM767 218h1v2h-1zM779 218h1v2h-1zM791 218h1v2h-1zM814 218h1v2h-1zM826 218h1v2h-1zM838 218h1v2h-1zM850 216h1v6h-1zM861 218h1v2h-1zM873 218h1v2h-1zM885 218h1v2h-1zM909 218h1v2h-1zM921 218h1v2h-1zM932 218h1v2h-1zM944 216h1v6h-1zM956 218h1v2h-1zM968 218h1v2h-1zM980 218h1v2h-1zM1003 218h1v2h-1zM1015 218h1v2h-1zM1027 218h1v2h-1zM1039 216h1v6h-1zM1050 218h1v2h-1zM1062 218h1v2h-1zM1074 218h1v2h-1zM1098 218h1v2h-1zM1110 218h1v2h-1zM1121 218h1v2h-1zM1133 216h1v6h-1zM1145 218h1v2h-1zM1157 218h1v2h-1zM1169 218h1v2h-1zM1192 218h1v2h-1zM1204 218h1v2h-1zM1216 218h1v2h-1zM1228 216h1v6h-1zM1239 218h1v2h-1zM1251 218h1v2h-1zM1263 218h1v2h-1zM1287 218h1v2h-1z" fill="#000"/><text x="1086.4" y="223.5" text-anchor="middle" font-family="Liberation Sans" font-size="11" fill="#111" stroke="#111" stroke-width="0.25">20</text><text x="991.9" y="223.5" text-anchor="middle" font-family="Liberation Sans" font-size="11" fill="#111" stroke="#111" stroke-width="0.25">40</text><text x="897.4" y="223.5" text-anchor="middle" font-family="Liberation Sans" font-size="11" fill="#111" stroke="#111" stroke-width="0.25">60</text><text x="802.9" y="223.5" text-anchor="middle" font-family="Liberation Sans" font-size="11" fill="#111" stroke="#111" stroke-width="0.25">80</text><text x="708.4" y="223.5" text-anchor="middle" font-family="Liberation Sans" font-size="11" fill="#111" stroke="#111" stroke-width="0.25">100</text><text x="613.9" y="223.5" text-anchor="middle" font-family="Liberation Sans" font-size="11" fill="#111" stroke="#111" stroke-width="0.25">120</text><text x="519.4" y="223.5" text-anchor="middle" font-family="Liberation Sans" font-size="11" fill="#111" stroke="#111" stroke-width="0.25">140</text><text x="424.9" y="223.5" text-anchor="middle" font-family="Liberation Sans" font-size="11" fill="#111" stroke="#111" stroke-width="0.25">160</text><text x="330.4" y="223.5" text-anchor="middle" font-family="Liberation Sans" font-size="11" fill="#111" stroke="#111" stroke-width="0.25">180</text><text x="1275.4" y="223.5" text-anchor="middle" font-family="Liberation Sans" font-size="11" fill="#111" stroke="#111" stroke-width="0.25">20</text><path d="M460 235h1v2h-1zM520 235h1v2h-1zM580 235h1v2h-1zM640 235h1v2h-1zM700 235h1v2h-1zM760 235h1v2h-1zM820 235h1v2h-1zM880 235h1v2h-1zM940 235h1v2h-1zM1000 235h1v2h-1zM1060 235h1v2h-1zM1120 235h1v2h-1z" fill="#000"/><path d="M423.5 230.5V226.5L428.5 222L433.5 226.5V230.5Z" fill="#fff" stroke="#9A9A9A" stroke-width="1"/><path d="M1175.5 208.5H1185.5V211.5L1181 217L1185.5 222.5V228.5H1175.5V222.5L1180 217L1175.5 211.5Z" fill="#fff" stroke="#9A9A9A" stroke-width="1"/><path d="M1175.5 228.5H1185.5V234.5H1175.5Z" fill="#fff" stroke="#9A9A9A" stroke-width="1"/><path d="M13 258h2v1h-2zM13 270h2v1h-2zM13 294h2v1h-2zM13 306h2v1h-2zM13 317h2v1h-2zM12 329h6v1h-6zM13 341h2v1h-2zM13 353h2v1h-2zM13 365h2v1h-2zM13 388h2v1h-2zM13 400h2v1h-2zM13 412h2v1h-2zM12 424h6v1h-6zM13 436h2v1h-2zM13 447h2v1h-2zM13 459h2v1h-2zM13 483h2v1h-2zM13 495h2v1h-2zM13 506h2v1h-2zM12 518h6v1h-6zM13 530h2v1h-2zM13 542h2v1h-2zM13 554h2v1h-2zM13 577h2v1h-2zM13 589h2v1h-2zM13 601h2v1h-2zM12 613h6v1h-6zM13 625h2v1h-2zM13 636h2v1h-2zM13 648h2v1h-2zM13 672h2v1h-2zM13 684h2v1h-2zM13 695h2v1h-2zM12 707h6v1h-6zM13 719h2v1h-2zM13 731h2v1h-2zM13 743h2v1h-2zM13 766h2v1h-2zM13 778h2v1h-2zM13 790h2v1h-2zM12 802h6v1h-6zM13 814h2v1h-2zM13 825h2v1h-2zM13 837h2v1h-2zM13 861h2v1h-2zM13 873h2v1h-2zM13 884h2v1h-2zM12 896h6v1h-6zM13 908h2v1h-2zM13 920h2v1h-2zM13 932h2v1h-2zM13 955h2v1h-2zM13 967h2v1h-2zM13 979h2v1h-2z" fill="#000"/><text transform="translate(19,282.5) rotate(-90)" text-anchor="middle" font-family="Liberation Sans" font-size="11" fill="#111" stroke="#111" stroke-width="0.25">20</text><text transform="translate(19,471.5) rotate(-90)" text-anchor="middle" font-family="Liberation Sans" font-size="11" fill="#111" stroke="#111" stroke-width="0.25">20</text><text transform="translate(19,566.0) rotate(-90)" text-anchor="middle" font-family="Liberation Sans" font-size="11" fill="#111" stroke="#111" stroke-width="0.25">40</text><text transform="translate(19,660.5) rotate(-90)" text-anchor="middle" font-family="Liberation Sans" font-size="11" fill="#111" stroke="#111" stroke-width="0.25">60</text><text transform="translate(19,755.0) rotate(-90)" text-anchor="middle" font-family="Liberation Sans" font-size="11" fill="#111" stroke="#111" stroke-width="0.25">80</text><text transform="translate(19,849.5) rotate(-90)" text-anchor="middle" font-family="Liberation Sans" font-size="11" fill="#111" stroke="#111" stroke-width="0.25">100</text><text transform="translate(19,944.0) rotate(-90)" text-anchor="middle" font-family="Liberation Sans" font-size="11" fill="#111" stroke="#111" stroke-width="0.25">120</text><path d="M92 347.3H190.4V316.1L288.8 378.9L190.4 441.6V410.4H92Z" fill="#FF0000"/><path d="M1587 245H1597L1592.0 238Z" fill="#555"/><path d="M1587 974H1597L1592.0 981.5Z" fill="#555"/><path d="M1609 256H1619L1614.0 248.5Z" fill="#555"/><path d="M1609 975H1619L1614.0 983Z" fill="#555"/><path d="M1601 589h2v1.2h-2zM1601 594h2v1.2h-2zM1601 599h2v1.2h-2zM1601 604h2v1.2h-2z" fill="#111"/><path d="M1601 591.5h2v1.2h-2zM1601 596.5h2v1.2h-2zM1601 601.5h2v1.2h-2z" fill="#888"/><g fill="none" stroke="#555" stroke-width="1.7"><circle cx="1899" cy="222.5" r="6.6"/><path d="M1894.3 227.2L1889 232.5" stroke-width="2.2"/></g><path d="M1637.5 261.5L1642 266L1646.5 261.5" stroke="#444" stroke-width="1.5" fill="none"/><path d="M1637.5 301.5L1642 306L1646.5 301.5" stroke="#444" stroke-width="1.5" fill="none"/><path d="M1637.5 341.5L1642 346L1646.5 341.5" stroke="#444" stroke-width="1.5" fill="none"/><path d="M1637.5 386L1642 381.5L1646.5 386" stroke="#444" stroke-width="1.5" fill="none"/><clipPath id="panelclip"><rect x="1600" y="205" width="317" height="783"/></clipPath><g clip-path="url(#panelclip)"><text x="1867" y="427" font-family="Liberation Sans" font-size="22" fill="#555" transform="translate(1867,427) scale(0.85,1) translate(-1867,-427)" style="font-weight:normal">12</text><path d="M1867.5 455L1874.5 438L1881.5 455M1870.5 449H1878.5" stroke="#5a5a5a" stroke-width="1.5" fill="none"/><path d="M1883 454.5H1884.5M1885.5 454.5H1887" stroke="#777" stroke-width="1"/><path d="M1867.5 483L1874.5 466L1881.5 483M1870.5 477H1878.5" stroke="#5a5a5a" stroke-width="1.5" fill="none"/><path d="M1883 482.5H1884.5M1885.5 482.5H1887" stroke="#777" stroke-width="1"/><path d="M1867.5 511L1874.5 494L1881.5 511M1870.5 505H1878.5" stroke="#5a5a5a" stroke-width="1.5" fill="none"/><path d="M1883 510.5H1884.5M1885.5 510.5H1887" stroke="#777" stroke-width="1"/><g stroke="#666" stroke-width="1.2" fill="none"><path d="M1877 522V538"/><path d="M1869.5 527.5L1884.5 522.5" stroke-width="1.6"/><path d="M1869.5 527.5L1867.5 533M1869.5 527.5L1872 533M1884.5 522.5L1882 529M1884.5 522.5L1886.5 529"/></g><circle cx="1877" cy="521.5" r="1.3" fill="#555"/><path d="M1871 540.5C1871 537.5 1883 537.5 1883 540.5Z" fill="#444"/><path d="M1866.5 533H1873.5C1873.5 537.5 1866.5 537.5 1866.5 533Z" fill="#E8821E"/><path d="M1880.5 529H1887.5C1887.5 533.5 1880.5 533.5 1880.5 529Z" fill="#E8821E"/><path d="M1868.5 534.5H1871.5M1882.5 530.5H1885.5" stroke="#FFE0C0" stroke-width="0.9"/><path d="M1867.5 567L1874.5 550L1881.5 567M1870.5 561H1878.5" stroke="#5a5a5a" stroke-width="1.5" fill="none"/><path d="M1883 566.5H1884.5M1885.5 566.5H1887" stroke="#777" stroke-width="1"/><circle cx="1877" cy="586" r="9.3" fill="none" stroke="#E8821E" stroke-width="1.7"/><text x="1877.3" y="591.3" text-anchor="middle" font-family="Liberation Sans" font-weight="bold" font-size="14" fill="#E8821E">$</text><circle cx="1877" cy="614" r="9.3" fill="none" stroke="#E8821E" stroke-width="1.7"/><text x="1877.3" y="619.3" text-anchor="middle" font-family="Liberation Sans" font-weight="bold" font-size="14" fill="#E8821E">$</text><g stroke="#666" stroke-width="1.2" fill="none"><path d="M1877 634V650"/><path d="M1869.5 639.5L1884.5 634.5" stroke-width="1.6"/><path d="M1869.5 639.5L1867.5 645M1869.5 639.5L1872 645M1884.5 634.5L1882 641M1884.5 634.5L1886.5 641"/></g><circle cx="1877" cy="633.5" r="1.3" fill="#555"/><path d="M1871 652.5C1871 649.5 1883 649.5 1883 652.5Z" fill="#444"/><path d="M1866.5 645H1873.5C1873.5 649.5 1866.5 649.5 1866.5 645Z" fill="#E8821E"/><path d="M1880.5 641H1887.5C1887.5 645.5 1880.5 645.5 1880.5 641Z" fill="#E8821E"/><path d="M1868.5 646.5H1871.5M1882.5 642.5H1885.5" stroke="#FFE0C0" stroke-width="0.9"/><circle cx="1877" cy="670" r="9.3" fill="none" stroke="#E8821E" stroke-width="1.7"/><text x="1877.3" y="675.3" text-anchor="middle" font-family="Liberation Sans" font-weight="bold" font-size="14" fill="#E8821E">$</text><circle cx="1877" cy="698" r="9.3" fill="none" stroke="#E8821E" stroke-width="1.7"/><text x="1877.3" y="703.3" text-anchor="middle" font-family="Liberation Sans" font-weight="bold" font-size="14" fill="#E8821E">$</text><circle cx="1877" cy="726" r="9.3" fill="none" stroke="#E8821E" stroke-width="1.7"/><text x="1877.3" y="731.3" text-anchor="middle" font-family="Liberation Sans" font-weight="bold" font-size="14" fill="#E8821E">$</text><g stroke="#5a5a5a" stroke-width="1.6" fill="none"><circle cx="1870.8" cy="749.5" r="3"/><circle cx="1882" cy="759.5" r="3"/><path d="M1884 745.5L1869.5 763.5"/></g><circle cx="1877" cy="782" r="9.3" fill="none" stroke="#E8821E" stroke-width="1.7"/><text x="1877.3" y="787.3" text-anchor="middle" font-family="Liberation Sans" font-weight="bold" font-size="14" fill="#E8821E">$</text><g stroke="#5a5a5a" stroke-width="1.6" fill="none"><circle cx="1870.8" cy="805.5" r="3"/><circle cx="1882" cy="815.5" r="3"/><path d="M1884 801.5L1869.5 819.5"/></g><circle cx="1877" cy="838" r="9.3" fill="none" stroke="#E8821E" stroke-width="1.7"/><text x="1877.3" y="843.3" text-anchor="middle" font-family="Liberation Sans" font-weight="bold" font-size="14" fill="#E8821E">$</text><g stroke="#5a5a5a" stroke-width="1.6" fill="none"><circle cx="1870.8" cy="861.5" r="3"/><circle cx="1882" cy="871.5" r="3"/><path d="M1884 857.5L1869.5 875.5"/></g><path d="M1867.5 903L1874.5 886L1881.5 903M1870.5 897H1878.5" stroke="#5a5a5a" stroke-width="1.5" fill="none"/><path d="M1883 902.5H1884.5M1885.5 902.5H1887" stroke="#777" stroke-width="1"/><g stroke="#666" stroke-width="1.2" fill="none"><path d="M1877 914V930"/><path d="M1869.5 919.5L1884.5 914.5" stroke-width="1.6"/><path d="M1869.5 919.5L1867.5 925M1869.5 919.5L1872 925M1884.5 914.5L1882 921M1884.5 914.5L1886.5 921"/></g><circle cx="1877" cy="913.5" r="1.3" fill="#555"/><path d="M1871 932.5C1871 929.5 1883 929.5 1883 932.5Z" fill="#444"/><path d="M1866.5 925H1873.5C1873.5 929.5 1866.5 929.5 1866.5 925Z" fill="#E8821E"/><path d="M1880.5 921H1887.5C1887.5 925.5 1880.5 925.5 1880.5 921Z" fill="#E8821E"/><path d="M1868.5 926.5H1871.5M1882.5 922.5H1885.5" stroke="#FFE0C0" stroke-width="0.9"/><rect x="1872" y="940" width="16" height="3" fill="#2F7CC4"/><path d="M1872.5 943V950M1877.5 943V956M1882.5 943V956M1887.5 943V956M1877 946.5H1888M1877 951.5H1888M1883 956H1888" stroke="#999" stroke-width="1"/><circle cx="1874" cy="954" r="6.3" fill="#F7F7F7" stroke="#666" stroke-width="1.3"/><path d="M1874 950V954.5H1877.5" stroke="#2F7CC4" stroke-width="1.4" fill="none"/><path d="M1867.5 987L1874.5 970L1881.5 987M1870.5 981H1878.5" stroke="#5a5a5a" stroke-width="1.5" fill="none"/><path d="M1883 986.5H1884.5M1885.5 986.5H1887" stroke="#777" stroke-width="1"/></g><path d="M7 1005H17M12 1000V1010" stroke="#333" stroke-width="2.2"/><path d="M237 1005.5H247" stroke="#333" stroke-width="2.2"/><path d="M268.5 1003H278L273.25 1008Z" fill="#444"/>
</svg></body></html>
